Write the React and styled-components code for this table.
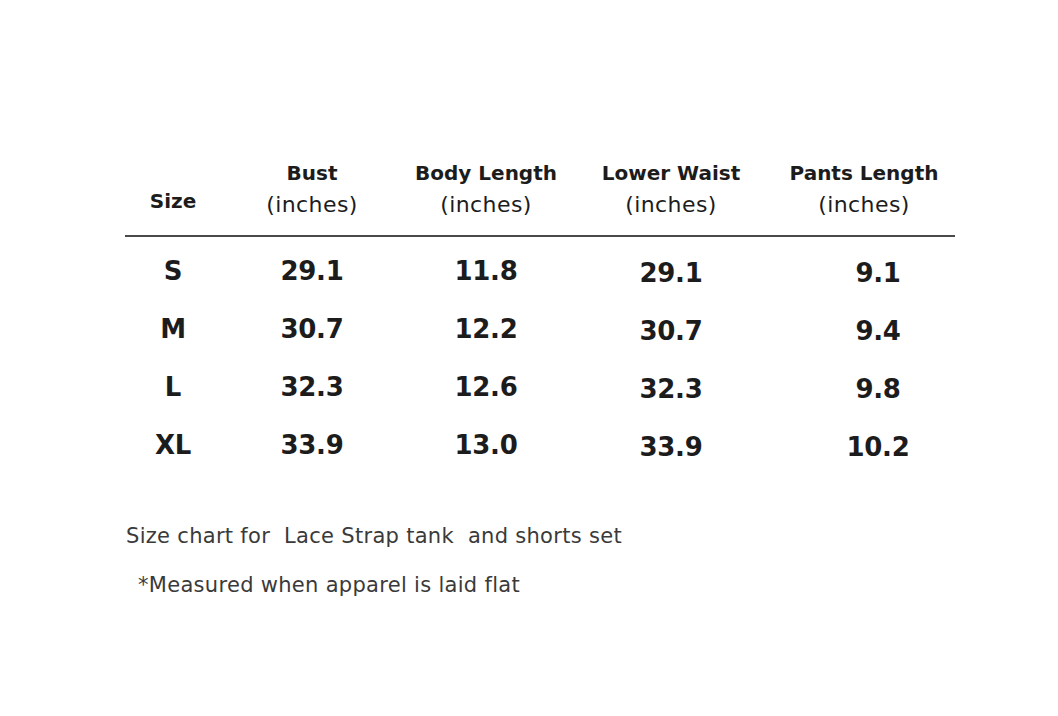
import React from "react";
import styled, { createGlobalStyle } from "styled-components";

const GlobalStyle = createGlobalStyle`
  body, html {
    margin: 0;
    padding: 0;
    background: #ffffff;
  }
  body {
    font-family: "DejaVu Sans", "Open Sans", sans-serif;
    color: #1c1c1c;
  }
`;

const columns = [
  { key: "size", title: null, label: "Size" },
  { key: "bust", title: "Bust" },
  { key: "body", title: "Body Length" },
  { key: "waist", title: "Lower Waist", drop: 2 },
  { key: "pants", title: "Pants Length", drop: 2, shift: 14 },
];

const rows = [
  { size: "S", bust: "29.1", body: "11.8", waist: "29.1", pants: "9.1" },
  { size: "M", bust: "30.7", body: "12.2", waist: "30.7", pants: "9.4" },
  { size: "L", bust: "32.3", body: "12.6", waist: "32.3", pants: "9.8" },
  { size: "XL", bust: "33.9", body: "13.0", waist: "33.9", pants: "10.2" },
];

const App = () => (
  <Page>
    <GlobalStyle />
    <Chart>
      <HeadRow>
        {columns.map((col) =>
          col.title ? (
            <HeadCell key={col.key}>
              <HeadTitle>{col.title}</HeadTitle>
              <HeadUnit>(inches)</HeadUnit>
            </HeadCell>
          ) : (
            <HeadCell key={col.key} $lift>
              <HeadTitle>{col.label}</HeadTitle>
            </HeadCell>
          )
        )}
      </HeadRow>
      <Rule />
      <Body>
        {rows.map((row) => (
          <DataRow key={row.size}>
            {columns.map((col) => (
              <DataCell key={col.key} $drop={col.drop} $shift={col.shift}>
                {row[col.key]}
              </DataCell>
            ))}
          </DataRow>
        ))}
      </Body>
    </Chart>
    <Notes>
      <Note>Size chart for&nbsp; Lace Strap tank&nbsp; and shorts set</Note>
      <Note $indent>*Measured when apparel is laid flat</Note>
    </Notes>
  </Page>
);

const Page = styled.div`
  width: 1058px;
  height: 716px;
  box-sizing: border-box;
  padding: 157px 0 0 125px;
  overflow: hidden;
`;

const Chart = styled.div`
  width: 830px;
`;

const grid = `
  display: grid;
  grid-template-columns: 96px 182px 166px 204px 182px;
`;

const HeadRow = styled.div`
  ${grid}
  align-items: end;
`;

const HeadCell = styled.div`
  display: flex;
  flex-direction: column;
  align-items: center;
  white-space: nowrap;
  margin-bottom: ${(p) => (p.$lift ? "4px" : "0")};
`;

const HeadTitle = styled.div`
  font-size: 20px;
  font-weight: 700;
  line-height: 32px;
`;

const HeadUnit = styled.div`
  font-size: 22px;
  font-weight: 400;
  line-height: 32px;
  letter-spacing: 0.4px;
`;

const Rule = styled.div`
  height: 2px;
  background: #4a4a4a;
  margin-top: 14px;
`;

const Body = styled.div`
  padding-top: 5px;
`;

const DataRow = styled.div`
  ${grid}
  height: 58px;
  align-items: center;
`;

const DataCell = styled.div`
  text-align: center;
  font-size: 26px;
  font-weight: 700;
  letter-spacing: -0.3px;
  transform: translate(${(p) => p.$shift || 0}px, ${(p) => p.$drop || 0}px);
`;

const Notes = styled.div`
  margin-top: 38px;
`;

const Note = styled.div`
  font-size: 21px;
  line-height: 49px;
  letter-spacing: 0.3px;
  color: #3a3a3a;
  padding-left: ${(p) => (p.$indent ? "13px" : "1px")};
  white-space: nowrap;
`;

export default App;
